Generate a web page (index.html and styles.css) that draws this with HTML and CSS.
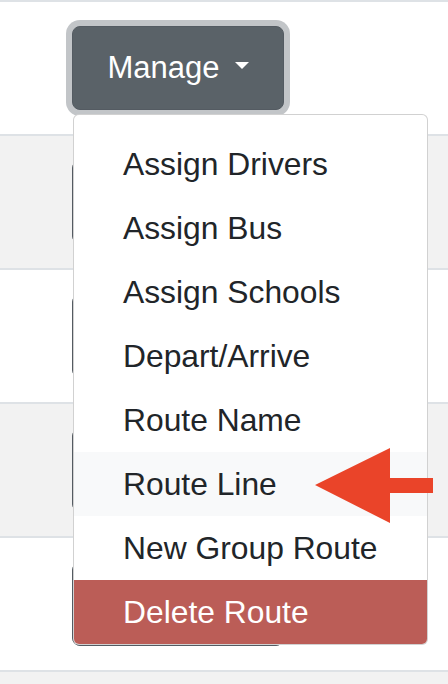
FILE: index.html
```html
<!DOCTYPE html>
<html lang="en">
<head>
    <meta charset="UTF-8">
    <meta name="viewport" content="width=device-width, initial-scale=1.0">
    <title>Routes</title>
    <link rel="stylesheet" href="styles.css">
</head>
<body>
    <table class="routes">
        <tbody>
            <tr>
                <td>
                    <div class="btn-group">
                        <button type="button" class="btn btn-manage is-open">Manage <span class="caret"></span></button>
                        <ul class="dropdown-menu">
                            <li><a class="dropdown-item" href="#">Assign Drivers</a></li>
                            <li><a class="dropdown-item" href="#">Assign Bus</a></li>
                            <li><a class="dropdown-item" href="#">Assign Schools</a></li>
                            <li><a class="dropdown-item" href="#">Depart/Arrive</a></li>
                            <li><a class="dropdown-item" href="#">Route Name</a></li>
                            <li><a class="dropdown-item active-hover" href="#">Route Line</a></li>
                            <li><a class="dropdown-item" href="#">New Group Route</a></li>
                            <li><a class="dropdown-item danger" href="#">Delete Route</a></li>
                        </ul>
                    </div>
                </td>
            </tr>
            <!-- the other rows' buttons sit under the open menu -->
            <tr>
                <td><button type="button" class="btn btn-manage" aria-label="Manage"></button></td>
            </tr>
            <tr>
                <td><button type="button" class="btn btn-manage" aria-label="Manage"></button></td>
            </tr>
            <tr>
                <td><button type="button" class="btn btn-manage" aria-label="Manage"></button></td>
            </tr>
            <tr>
                <td><button type="button" class="btn btn-manage" aria-label="Manage"></button></td>
            </tr>
            <tr>
                <td class="empty"></td>
            </tr>
        </tbody>
    </table>

    <!-- annotation arrow pointing at "Route Line" -->
    <svg class="pointer" width="118" height="77" viewBox="0 0 118 77">
        <polygon points="0,38 75,1 75,31 118,31 118,46 75,46 75,76" fill="#ea4429"/>
    </svg>
</body>
</html>
```

FILE: styles.css
```css
body {
    font-family: 'Liberation Sans', Arial, sans-serif;
    background-color: #f2f2f2;
    color: #212529;
    margin: 0;
    padding: 0;
    position: relative;
    overflow: hidden;
    height: 684px;
}

.routes {
    width: 100%;
    border-collapse: collapse;
}

.routes td {
    border-top: 2px solid #dee2e6;
    padding: 24px 0 24px 72px;
    height: 84px;
    vertical-align: top;
}

.routes tr:nth-child(odd) td {
    background-color: #ffffff;
}

.routes tr:nth-child(even) td {
    background-color: #f2f2f2;
}

.routes td.empty {
    background-color: #f2f2f2;
    height: 0;
    padding: 0;
}

.btn-group {
    position: relative;
    display: inline-block;
}

.btn {
    display: flex;
    align-items: center;
    justify-content: center;
    width: 212px;
    height: 84px;
    padding: 0;
    font-family: inherit;
    font-size: 31px;
    color: #ffffff;
    background-color: #5a6268;
    border: 1px solid #545b62;
    border-radius: 8px;
    cursor: pointer;
}

.btn.is-open {
    box-shadow: 0 0 0 6px #c2c5c8;
}

.caret {
    display: inline-block;
    width: 0;
    height: 0;
    margin-left: 15px;
    margin-top: -6px;
    border-top: 7px solid #ffffff;
    border-left: 7.5px solid transparent;
    border-right: 7.5px solid transparent;
}

.dropdown-menu {
    position: absolute;
    z-index: 10;
    top: calc(100% + 4px);
    left: 1px;
    width: 353px;
    margin: 0;
    padding: 17px 0 0;
    list-style: none;
    background-color: #ffffff;
    border: 1px solid rgba(0, 0, 0, 0.18);
    border-radius: 6px;
    overflow: hidden;
}

.dropdown-item {
    display: block;
    height: 64px;
    line-height: 64px;
    padding-left: 49px;
    font-size: 31.8px;
    color: #212529;
    text-decoration: none;
    white-space: nowrap;
}

.dropdown-item.active-hover {
    background-color: #f8f9fa;
}

.dropdown-item.danger {
    background-color: #bb5d57;
    color: #ffffff;
}

.pointer {
    position: absolute;
    left: 315px;
    top: 447px;
    z-index: 20;
}
```
